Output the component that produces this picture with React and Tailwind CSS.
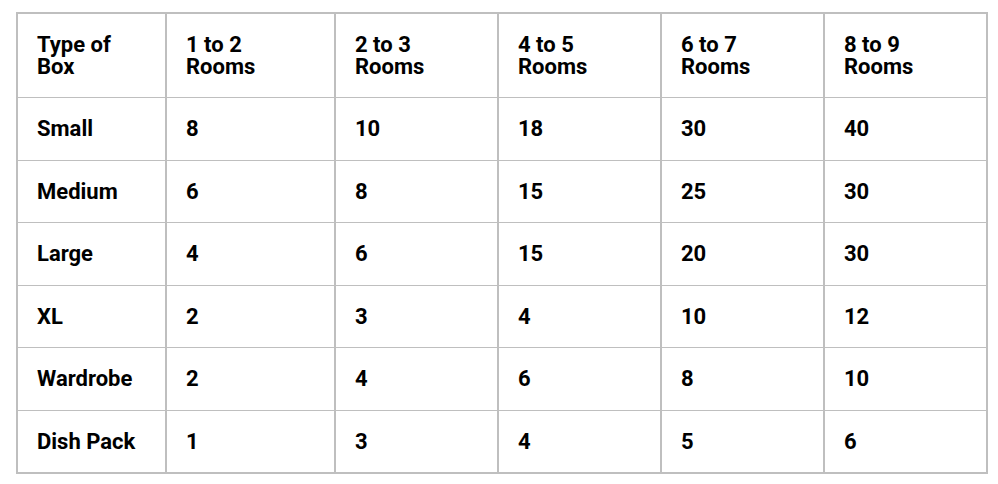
import React from 'react';

const HEADERS = [
  ['Type of', 'Box'],
  ['1 to 2', 'Rooms'],
  ['2 to 3', 'Rooms'],
  ['4 to 5', 'Rooms'],
  ['6 to 7', 'Rooms'],
  ['8 to 9', 'Rooms'],
];

const ROWS = [
  ['Small', '8', '10', '18', '30', '40'],
  ['Medium', '6', '8', '15', '25', '30'],
  ['Large', '4', '6', '15', '20', '30'],
  ['XL', '2', '3', '4', '10', '12'],
  ['Wardrobe', '2', '4', '6', '8', '10'],
  ['Dish Pack', '1', '3', '4', '5', '6'],
];

const cell = 'border-x-2 border-y border-[#bfbfbf] px-[19px] py-[20px] text-left align-top leading-[21.5px] font-bold';

export default function App() {
  return (
    <div className="min-h-[484px] bg-white pl-[16px] pt-[12px] font-['Roboto','Liberation_Sans',sans-serif]">
      <table className="w-[970px] table-fixed border-collapse border-2 border-[#bfbfbf] text-[22px] font-bold text-black">
        <colgroup>
          <col className="w-[149px]" />
          <col className="w-[169px]" />
          <col className="w-[163px]" />
          <col className="w-[163px]" />
          <col className="w-[163px]" />
          <col className="w-[163px]" />
        </colgroup>
        <thead>
          <tr>
            {HEADERS.map(([a, b]) => (
              <th key={a} className={cell}>
                {a}
                <br />
                {b}
              </th>
            ))}
          </tr>
        </thead>
        <tbody>
          {ROWS.map((row) => (
            <tr key={row[0]}>
              {row.map((c, i) => (
                <td key={i} className={cell}>
                  {c}
                </td>
              ))}
            </tr>
          ))}
        </tbody>
      </table>
    </div>
  );
}
